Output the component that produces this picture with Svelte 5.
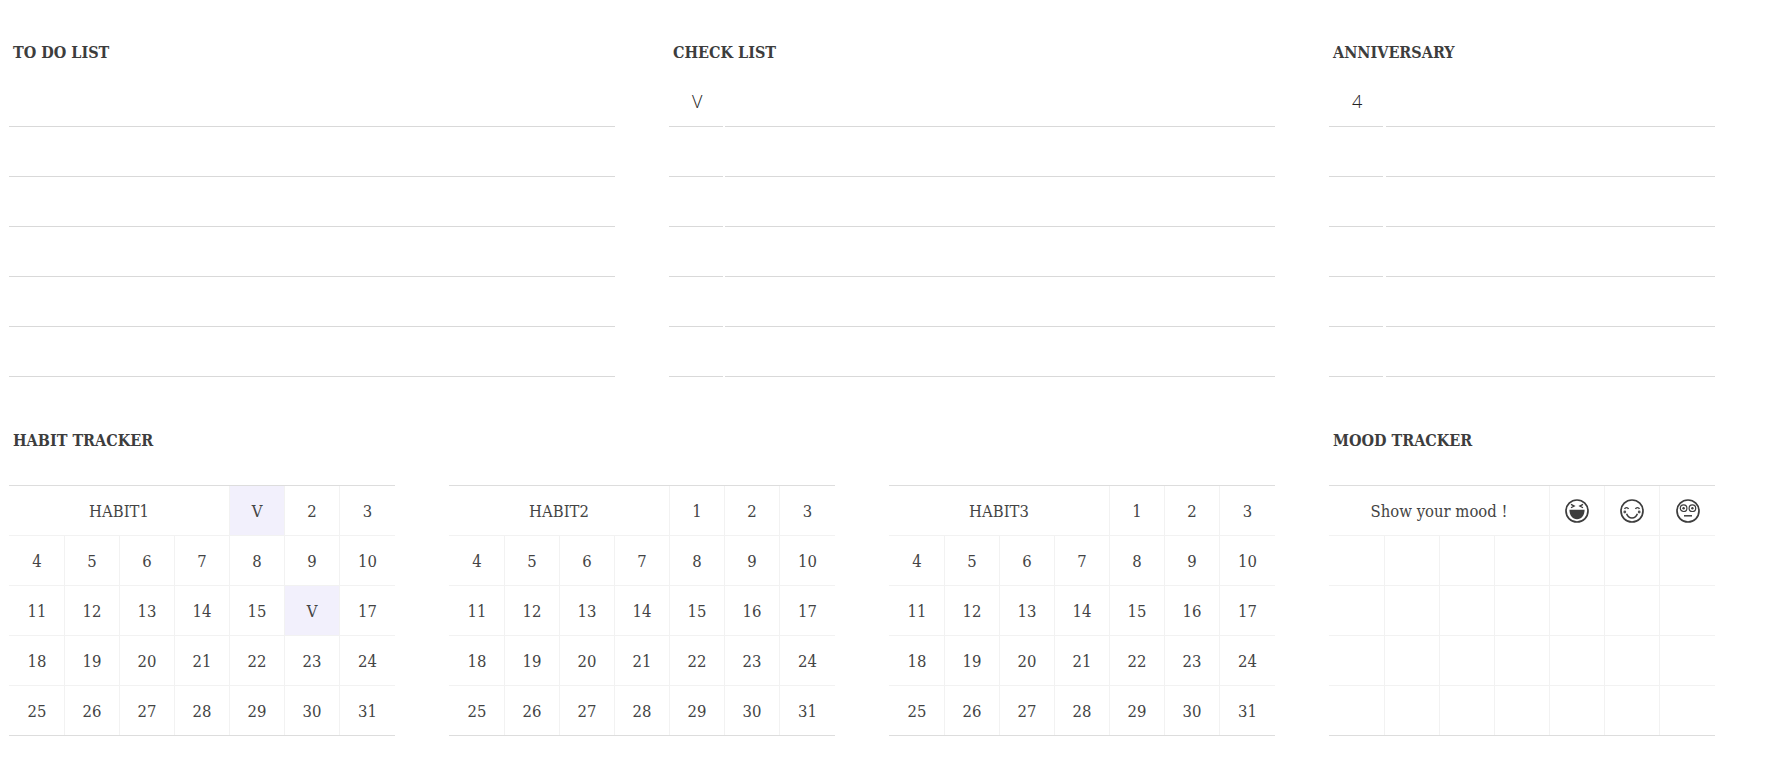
<script>
	const days = Array.from({ length: 28 }, (_, i) => i + 4);
	const lists = [
		{ title: 'TO DO LIST', wide: true, split: false, mark: '' },
		{ title: 'CHECK LIST', wide: true, split: true, mark: 'V' },
		{ title: 'ANNIVERSARY', wide: false, split: true, mark: '4' }
	];
	const habits = [
		{ name: 'HABIT1', first: ['V', 2, 3], checked: [16] },
		{ name: 'HABIT2', first: [1, 2, 3], checked: [] },
		{ name: 'HABIT3', first: [1, 2, 3], checked: [] }
	];
	const rows = [0, 1, 2, 3, 4, 5];
	const moodCells = Array.from({ length: 28 });
</script>

<div class="page">
	<section class="top">
		{#each lists as list}
			<div class="block" class:wide={list.wide}>
				<h3>{list.title}</h3>
				{#each rows as r}
					<div class="line" class:loose={!list.wide}>
						{#if list.split}
							<span class="mark">{r === 0 ? list.mark : ''}</span>
						{/if}
						<span class="rest"></span>
					</div>
				{/each}
			</div>
		{/each}
	</section>

	<section class="bottom">
		{#each habits as habit, i}
			<div class="block">
				<h3 class:hidden={i > 0}>HABIT TRACKER</h3>
				<div class="cal">
					<div class="cell name">{habit.name}</div>
					{#each habit.first as d}
						<div class="cell" class:on={d === 'V'}>{d}</div>
					{/each}
					{#each days as d}
						{#if habit.checked.includes(d)}
							<div class="cell on">V</div>
						{:else}
							<div class="cell">{d}</div>
						{/if}
					{/each}
				</div>
			</div>
		{/each}

		<div class="block">
			<h3>MOOD TRACKER</h3>
			<div class="cal">
				<div class="cell name">Show your mood !</div>
				<div class="cell face">
					<svg viewBox="0 0 24 24" width="24" height="24">
						<circle cx="12" cy="12" r="11" fill="none" stroke="#3d3d3d" stroke-width="1.7" />
						<path d="M6 5.4l3.2 1.7-3.2 1.7M18 5.4l-3.2 1.7 3.2 1.7" fill="none" stroke="#3d3d3d" stroke-width="1.3" />
						<path d="M4.4 10.8h15.2c0 5.6-3.1 9.4-7.6 9.4s-7.6-3.8-7.6-9.4z" fill="#3d3d3d" />
					</svg>
				</div>
				<div class="cell face">
					<svg viewBox="0 0 24 24" width="24" height="24">
						<circle cx="12" cy="12" r="11" fill="none" stroke="#3d3d3d" stroke-width="1.7" />
						<path d="M4.6 10c.6-1.9 3.2-1.9 3.9 0M15.5 10c.7-1.9 3.3-1.9 3.9 0" fill="none" stroke="#3d3d3d" stroke-width="1.4" />
						<path d="M6.6 14.8c1 2.8 3 4.2 5.4 4.2s4.4-1.4 5.4-4.2" fill="none" stroke="#3d3d3d" stroke-width="1.5" />
						<circle cx="4.8" cy="13" r="1.4" fill="#555" />
						<circle cx="19.2" cy="13" r="1.4" fill="#555" />
					</svg>
				</div>
				<div class="cell face">
					<svg viewBox="0 0 24 24" width="24" height="24">
						<circle cx="12" cy="12" r="11" fill="none" stroke="#3d3d3d" stroke-width="1.7" />
						<circle cx="7.6" cy="9.2" r="3.3" fill="none" stroke="#3d3d3d" stroke-width="1.2" />
						<circle cx="16.4" cy="9.2" r="3.3" fill="none" stroke="#3d3d3d" stroke-width="1.2" />
						<circle cx="7.6" cy="9.2" r="1.2" fill="#3d3d3d" />
						<circle cx="16.4" cy="9.2" r="1.2" fill="#3d3d3d" />
						<path d="M8 16.8h8" stroke="#3d3d3d" stroke-width="1.5" />
					</svg>
				</div>
				{#each moodCells as _}
					<div class="cell"></div>
				{/each}
			</div>
		</div>
	</section>
</div>

<style>
	:global(body) {
		margin: 0;
		background: #fff;
		color: #444;
		font-family: "DejaVu Serif Condensed", "DejaVu Serif", serif;
	}

	.page {
		padding: 27px 0 0 9px;
	}

	.top,
	.bottom {
		display: flex;
		gap: 54px;
	}

	.bottom {
		margin-top: 38px;
	}

	.block {
		width: 386px;
	}

	.block.wide {
		width: 606px;
	}

	h3 {
		margin: 0;
		height: 50px;
		padding-left: 4px;
		font-size: 16px;
		line-height: 51px;
		font-weight: 700;
		color: #3d3d3d;
	}

	h3.hidden {
		visibility: hidden;
	}

	.bottom h3 {
		margin-bottom: 20px;
	}

	.line {
		display: flex;
		gap: 2px;
		height: 50px;
	}

	.line.loose {
		gap: 3px;
	}

	.mark {
		flex: 0 0 54px;
		box-sizing: border-box;
		border-bottom: 1px solid #d9d9d9;
		padding-left: 23px;
		font-family: "Open Sans", sans-serif;
		font-size: 18px;
		font-weight: 300;
		line-height: 48px;
		color: #222;
	}

	.rest {
		flex: 1;
		border-bottom: 1px solid #d9d9d9;
	}

	.cal {
		display: grid;
		grid-template-columns: repeat(6, 55px) 1fr;
		grid-template-rows: repeat(4, 50px) 49px;
		border-top: 1px solid #ddd;
		border-bottom: 1px solid #ddd;
	}

	.cell {
		display: flex;
		align-items: center;
		justify-content: center;
		box-sizing: border-box;
		padding-top: 2px;
		border-left: 1px solid #f2f2f2;
		border-bottom: 1px solid #f2f2f2;
		font-size: 16.5px;
		color: #444;
	}

	.cell:nth-last-child(-n + 7) {
		border-bottom: none;
	}

	.cell.face {
		padding-top: 0;
	}

	.cell.name {
		grid-column: span 4;
		border-left: none;
	}

	/* first column of the rows under the name cell */
	.cell:nth-child(7n + 5) {
		border-left: none;
		padding-left: 1px;
	}

	.cell.on {
		background: #f2f0fc;
	}
</style>
